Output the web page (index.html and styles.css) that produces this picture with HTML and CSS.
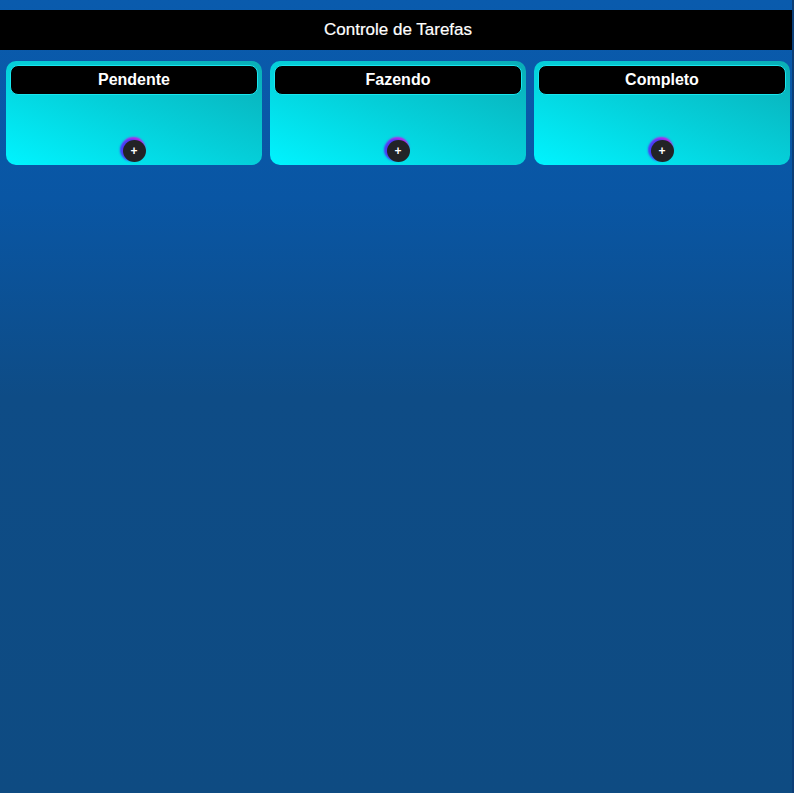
FILE: index.html
```html
<!DOCTYPE html>
<html lang="pt">
<head>
<meta charset="utf-8">
<title>Controle de Tarefas</title>
<link rel="stylesheet" href="styles.css">
</head>
<body>
<div class="page">
  <header class="topbar">Controle de Tarefas</header>
  <main class="board">
    <section class="column">
      <h2 class="column-title">Pendente</h2>
      <div class="column-body"><button class="add-btn">+</button></div>
    </section>
    <section class="column">
      <h2 class="column-title">Fazendo</h2>
      <div class="column-body"><button class="add-btn">+</button></div>
    </section>
    <section class="column">
      <h2 class="column-title">Completo</h2>
      <div class="column-body"><button class="add-btn">+</button></div>
    </section>
  </main>
</div>
</body>
</html>
```

FILE: styles.css
```css
html {
  background: #0c3f78;
}
body {
  margin: 0;
  font-family: "Liberation Sans", Arial, sans-serif;
}
.page {
  width: 792px;
  min-height: 793px;
  padding-top: 10px;
  box-sizing: border-box;
  background: linear-gradient(to bottom, #0a5bad 0%, #0956a4 25%, #0e4c86 50%, #0e4b82 100%);
}
.topbar {
  height: 40px;
  padding-left: 4px;
  background: #000;
  color: #fff;
  font-size: 17px;
  display: flex;
  align-items: center;
  justify-content: center;
  -webkit-text-stroke: 0.2px #fff;
}
.board {
  display: grid;
  grid-template-columns: repeat(3, 256px);
  gap: 8px;
  padding: 11px 2px 0 6px;
}
.column {
  height: 104px;
  box-sizing: border-box;
  padding: 4px 4px 3px;
  border-radius: 10px;
  background: linear-gradient(to top right, #00f4ff 0%, #05cfd9 50%, #0aadb6 100%);
  display: flex;
  flex-direction: column;
}
.column-title {
  margin: 0;
  height: 30px;
  box-sizing: border-box;
  background: #000;
  border: 1px solid #19e6ee;
  border-radius: 8px;
  color: #fff;
  font-size: 16px;
  font-weight: bold;
  display: flex;
  align-items: center;
  justify-content: center;
}
.column-body {
  flex: 1;
  display: flex;
  align-items: flex-end;
  justify-content: center;
}
.add-btn {
  width: 23px;
  height: 22px;
  padding: 0;
  border: none;
  border-radius: 50%;
  background: #222326;
  color: #fff;
  font-family: "Liberation Sans", Arial, sans-serif;
  font-size: 12px;
  font-weight: bold;
  line-height: 22px;
  box-shadow: -3px -1px 2px #4a3cf5, -1px -3px 2px #c21ee8;
}
```
